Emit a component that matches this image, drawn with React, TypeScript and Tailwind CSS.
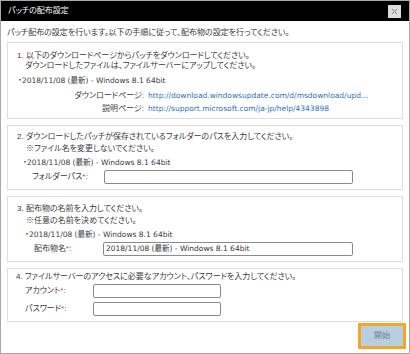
import { X } from 'lucide-react';

const font = "font-['Liberation_Sans','Noto_Sans_CJK_JP',sans-serif] [font-feature-settings:'palt']";
const latin = "font-['DejaVu_Sans','Noto_Sans_CJK_JP',sans-serif] text-[7.5px]";

function Req() {
    return <span className="text-[#e23b3b]">*</span>;
}

function Release({ className }: { className: string }) {
    return <p className={`h-[10px] ${className}`}>・<span className={latin}>2018/11/08 (最新) - Windows 8.1 64bit</span></p>;
}

function Field({ value, className }: { value?: string; className: string }) {
    return (
        <div className={`h-[14px] rounded-[2px] border border-[#8a8a8a] bg-white px-[2px] leading-[12px] text-[#333] ${className}`}>
            {value && <span className={latin}>{value}</span>}
        </div>
    );
}

export default function App() {
    return (
        <div className={`flex h-[354px] w-[410px] flex-col border border-[#a9a9a9] bg-white text-[8px] leading-[10px] text-[#3a3a3a] ${font}`}>
            {/* Title bar */}
            <div className="flex h-[20px] shrink-0 items-center justify-between bg-black pl-[7px] pr-[8px]">
                <span className="text-[8px] text-white">パッチの配布設定</span>
                <div className="flex h-[13px] w-[13px] items-center justify-center bg-[#dcdcdc]">
                    <X className="h-[9px] w-[9px] text-[#6f7c88]" strokeWidth={2.5} />
                </div>
            </div>

            <div className="flex flex-col pl-[6px] pr-[6px]">
                <p className="mt-[7px] h-[10px]">パッチ配布の設定を行います。以下の手順に従って、配布物の設定を行ってください。</p>

                {/* Step 1 */}
                <div className="mt-[4px] flex flex-col border border-[#dedede] pb-[4px] pl-[9px] pt-[8px]">
                    <p className="h-[10px]">1. 以下のダウンロードページからパッチをダウンロードしてください。</p>
                    <p className="h-[10px] pl-[8px]">ダウンロードしたファイルは、ファイルサーバーにアップしてください。</p>
                    <Release className="mt-[5px] pl-[1px]" />
                    <div className="mt-[5px] flex h-[10px]">
                        <span className="w-[127px] text-right">ダウンロードページ:</span>
                        <span className={`ml-[4px] text-[#2f6fc0] ${latin}`}>http://download.windowsupdate.com/d/msdownload/upd…</span>
                    </div>
                    <div className="mt-[3px] flex h-[10px]">
                        <span className="w-[127px] text-right">説明ページ:</span>
                        <span className={`ml-[4px] text-[#2f6fc0] ${latin}`}>http://support.microsoft.com/ja-jp/help/4343898</span>
                    </div>
                </div>

                {/* Step 2 */}
                <div className="mt-[6px] flex flex-col border border-[#dedede] pb-[5px] pl-[9px] pt-[6px]">
                    <p className="h-[10px]">2. ダウンロードしたパッチが保存されているフォルダーのパスを入力してください。</p>
                    <p className="mt-[2px] h-[10px] pl-[9px]">※ファイル名を変更しないでください。</p>
                    <Release className="mt-[4px] pl-[6px]" />
                    <div className="mt-[2px] flex items-center">
                        <span className="w-[87px] pl-[15px]">
                            フォルダーパス<Req />:
                        </span>
                        <Field className="w-[249px]" />
                    </div>
                </div>

                {/* Step 3 */}
                <div className="mt-[6px] flex flex-col border border-[#dedede] pb-[5px] pl-[9px] pt-[7px]">
                    <p className="h-[10px]">3. 配布物の名前を入力してください。</p>
                    <p className="mt-[2px] h-[10px] pl-[9px]">※任意の名前を決めてください。</p>
                    <Release className="mt-[4px] pl-[8px]" />
                    <div className="mt-[2px] flex items-center">
                        <span className="w-[86px] pl-[17px]">
                            配布物名<Req />:
                        </span>
                        <Field className="w-[250px]" value="2018/11/08 (最新) - Windows 8.1 64bit" />
                    </div>
                </div>

                {/* Step 4 */}
                <div className="mt-[6px] flex flex-col border border-[#dedede] pb-[5px] pl-[8px] pt-[3px]">
                    <p className="h-[10px]">4. ファイルサーバーのアクセスに必要なアカウント、パスワードを入力してください。</p>
                    <div className="mt-[2px] flex items-center">
                        <span className="w-[77px] pl-[9px]">
                            アカウント<Req />:
                        </span>
                        <Field className="w-[128px]" />
                    </div>
                    <div className="mt-[4px] flex items-center">
                        <span className="w-[77px] pl-[9px]">
                            パスワード<Req />:
                        </span>
                        <Field className="w-[128px]" />
                    </div>
                </div>

                {/* Footer */}
                <div className="-mr-[3px] mt-[1px] flex justify-end">
                    <button className="flex h-[26px] w-[48px] items-center justify-center border-[3px] border-[#f3a62a] bg-[#b8cfe0] text-[8px] text-[#687f93]">
                        開始
                    </button>
                </div>
            </div>
        </div>
    );
}
